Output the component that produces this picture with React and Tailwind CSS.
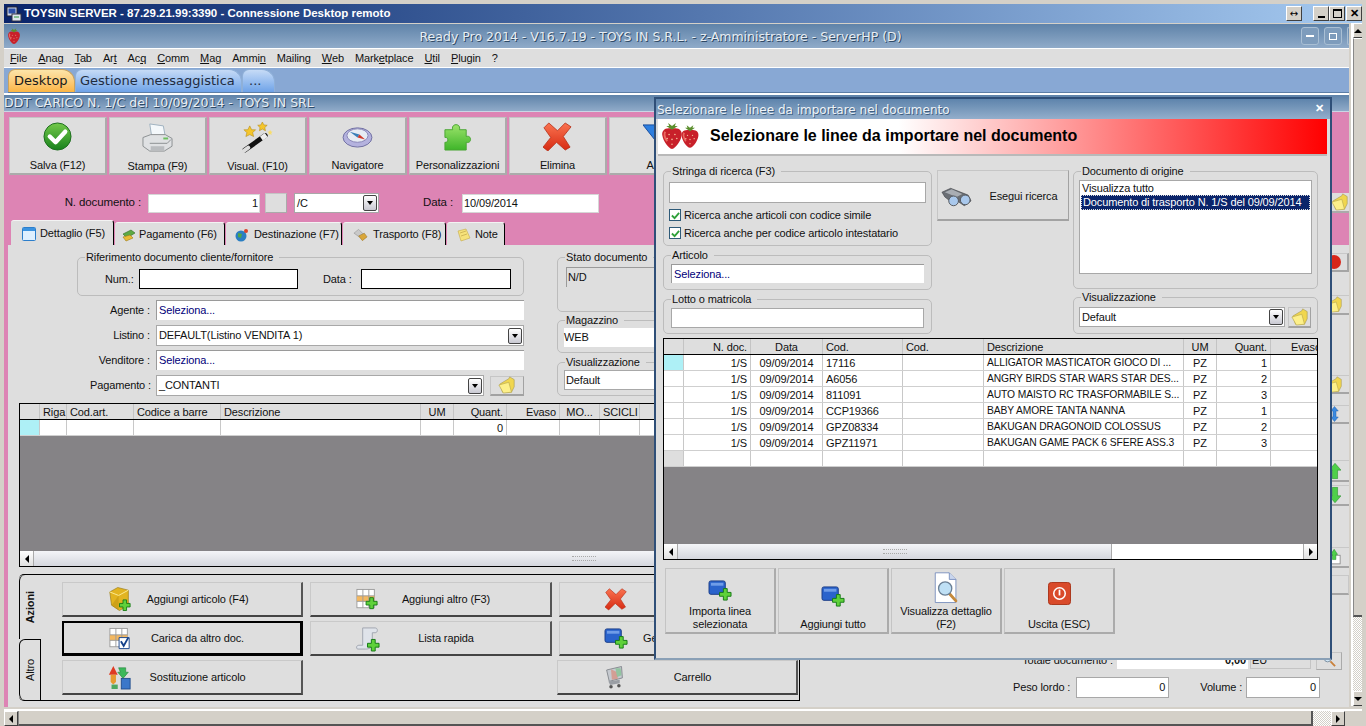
const FONT = "font-['Liberation_Sans',Arial,sans-serif]"

/* ---------- icons ---------- */
const Strawberry = ({ className }) => (
  <svg viewBox="0 0 24 28" className={className}>
    <path d="M12 6C5 4 1 8 2 13c1 6 6 13 10 14 4-1 9-8 10-14 1-5-3-9-10-7z" fill="#c8202a" />
    <path d="M5 9c-2 3 0 7 2 10" stroke="#ea6a60" strokeWidth="2" fill="none" />
    <path d="M12 7L6 3l3 0L8 0l4 3 4-3-1 3 3 0z" fill="#5c8f2e" />
    <g fill="#f3c6a0"><circle cx="9" cy="12" r=".8" /><circle cx="15" cy="12" r=".8" /><circle cx="12" cy="17" r=".8" /><circle cx="7" cy="16" r=".8" /><circle cx="17" cy="16" r=".8" /><circle cx="12" cy="22" r=".8" /></g>
  </svg>
)

const CheckOk = () => (
  <svg viewBox="0 0 30 30" className="w-[29px] h-[29px]">
    <defs><linearGradient id="okg" x1="0" y1="0" x2="0" y2="1"><stop offset="0" stopColor="#74c94a" /><stop offset="1" stopColor="#17811c" /></linearGradient></defs>
    <circle cx="15" cy="15" r="14" fill="url(#okg)" stroke="#1c6d1e" />
    <path d="M7 15l6 6L23 10" stroke="#fff" strokeWidth="4.5" fill="none" strokeLinecap="round" strokeLinejoin="round" />
  </svg>
)

const Printer = () => (
  <svg viewBox="0 0 32 32" className="w-[31px] h-[31px]">
    <path d="M8 2l14 2 2 11H10z" fill="#f4f8fb" stroke="#9fb2c0" />
    <path d="M1 16l8-3h15l7 4v8l-8 5H8l-7-5z" fill="#dfe1e3" stroke="#8b8f92" />
    <path d="M8 22h18l4-4" stroke="#8b8f92" fill="none" />
    <rect x="22" y="16" width="5" height="2" fill="#6bbf5e" />
    <path d="M9 25h14v4H9z" fill="#b9bcbf" />
  </svg>
)

const Wand = () => (
  <svg viewBox="0 0 32 32" className="w-[31px] h-[31px]">
    <path d="M3 29L24 14" stroke="#111" strokeWidth="5" strokeLinecap="round" />
    <path d="M1.5 30l5-3.6" stroke="#ddd" strokeWidth="4" strokeLinecap="round" />
    <path d="M20 17l5-3.5" stroke="#eee" strokeWidth="5" />
    <path d="M8 4l2 4 4 0-3 3 1 4-4-2-4 2 1-4-3-3 4 0z" fill="#f5c62c" stroke="#b48a18" strokeWidth=".6" />
    <path d="M21 0l1.6 3 3.4.4-2.500 2.300.7 3.300-3.200-1.700-3 1.700.6-3.300-2.400-2.300 3.300-.4z" fill="#f5c62c" stroke="#b48a18" strokeWidth=".6" />
    <path d="M29 8l.8 1.800 1.800.2-1.400 1.300.4 2-1.600-1-1.700 1 .4-2-1.300-1.300 1.800-.2z" fill="#f8dd6a" />
  </svg>
)

const Compass = () => (
  <svg viewBox="0 0 32 26" className="w-[31px] h-[25px]">
    <ellipse cx="16" cy="14" rx="15" ry="10" fill="#b4b2de" stroke="#6e6da0" />
    <ellipse cx="16" cy="12" rx="11" ry="7" fill="#e7ecf3" stroke="#8885b5" />
    <path d="M8 8l10 3-2 3z" fill="#3a7fb8" />
    <path d="M24 16l-8-2 2-3z" fill="#d03a2a" />
  </svg>
)

const PuzzleIcon = () => (
  <svg viewBox="0 0 32 30" className="w-[31px] h-[29px]">
    <defs><linearGradient id="pzg" x1="0" y1="0" x2="0" y2="1"><stop offset="0" stopColor="#9be36a" /><stop offset="1" stopColor="#3fb52a" /></linearGradient></defs>
    <path d="M3 8h8c-2-7 9-7 7 0h7v7c6-2 6 8 0 6v8H3v-8c4 1 4-6 0-5z" fill="url(#pzg)" stroke="#4aa534" />
  </svg>
)

const RedX = ({ size = 'w-[29px] h-[29px]' }) => (
  <svg viewBox="0 0 30 30" className={size}>
    <defs><linearGradient id="xg" x1="0" y1="0" x2="0" y2="1"><stop offset="0" stopColor="#fa7350" /><stop offset="1" stopColor="#d62a12" /></linearGradient></defs>
    <path d="M6 1l9 8 8-8 6 4-8 10 7 11-5 3-9-8-9 9-5-4 8-10L1 6z" fill="url(#xg)" stroke="#b42b14" strokeWidth=".8" strokeLinejoin="round" />
  </svg>
)

const Folder = ({ className = 'w-[18px] h-[18px]' }) => (
  <svg viewBox="0 0 20 20" className={className}>
    <path d="M2 9l10-6 1-2 5 3 0 8-3 6L5 18z" fill="#f0d64e" stroke="#a89b58" strokeWidth=".7" />
    <path d="M1 10l11-3 3 11-9 1z" fill="#fdf08a" stroke="#b8a84e" strokeWidth=".7" />
  </svg>
)

const GreenPlus = ({ x, y, s = 1 }) => (
  <path
    transform={`translate(${x} ${y}) scale(${s})`}
    d="M4 0h4v4h4v4H8v4H4V8H0V4h4z"
    fill="#5fd13a"
    stroke="#167a16"
  />
)

const BlueAdd = () => (
  <svg viewBox="0 0 26 24" className="w-[25px] h-[23px]">
    <rect x="1" y="2" width="17" height="14" rx="2" fill="#2a63cc" stroke="#1b3d87" />
    <rect x="3" y="4" width="13" height="3" fill="#6f9ce8" />
    <GreenPlus x={12} y={10} />
  </svg>
)

const GoldBox = () => (
  <svg viewBox="0 0 26 28" className="w-[23px] h-[28px]">
    <path d="M2 6l9-5 12 3v17l-10 6-9-6z" fill="#e2b420" stroke="#96760e" strokeWidth=".7" />
    <path d="M2 6l10 4 11-6" fill="none" stroke="#fff0a0" />
    <path d="M12 10v17L4 21z" fill="#b88e10" opacity=".5" />
    <GreenPlus x={13} y={15} />
  </svg>
)

const TableIcon = ({ children }) => (
  <svg viewBox="0 0 24 24" className="w-[22px] h-[23px]">
    <rect x="1" y="1" width="19" height="20" fill="#fff" stroke="#9a9a9a" />
    <rect x="1" y="8" width="19" height="6" fill="#f4b860" />
    <path d="M1 8h19M1 14h19M7.500 1v20M14 1v20" stroke="#9a9a9a" fill="none" />
    {children}
  </svg>
)

const ScrollPlus = () => (
  <svg viewBox="0 0 26 28" className="w-[25px] h-[27px]">
    <path d="M8 3h13c3 0 3 5 0 5h-3v11c0 5-4 6-7 6H3c-2 0-2-4 1-4h4z" fill="#dfe3ea" stroke="#a0a5b0" />
    <GreenPlus x={13} y={15} />
  </svg>
)

const SwapIcon = () => (
  <svg viewBox="0 0 26 28" className="w-[23px] h-[27px]">
    <path d="M6 1l5 10H1z" fill="#df3a22" />
    <path d="M3 11h6v8l-3 3-3-3z" fill="#e89a30" />
    <path d="M12 3h8v5l3 0-6 7-6-7h3z" fill="#3cb85a" stroke="#1c7a34" strokeWidth=".6" />
    <rect x="15" y="15" width="10" height="12" fill="#3b77c9" stroke="#1f4a8a" />
    <path d="M4 22h7v5H4z" fill="#4ea860" />
  </svg>
)

const Cart = () => (
  <svg viewBox="0 0 24 28" className="w-[21px] h-[26px]">
    <path d="M3 6l17-4 1 13-15 4z" fill="#c6cad0" stroke="#7f8389" />
    <path d="M8 5l6 3 2 8-7 1z" fill="#d88c7a" opacity=".7" />
    <path d="M13 4l6 0 1 8-5 2z" fill="#7cc28c" opacity=".7" />
    <path d="M5 19l13-2v4l-11 2z" fill="#9a9ea4" />
    <circle cx="8" cy="25" r="2" fill="#555" /><circle cx="17" cy="24" r="2" fill="#555" />
  </svg>
)

const Binoculars = () => (
  <svg viewBox="0 0 32 20" className="w-[31px] h-[20px] shrink-0">
    <path d="M1 5l9-4 18 7 3 6-7 5-6-4-5 2-9-7z" fill="#6a6e74" stroke="#3c3f44" strokeWidth=".6" />
    <path d="M4 5l7-3 11 5-6 3z" fill="#a9adb3" />
    <circle cx="13" cy="14" r="5" fill="#a9c8ec" stroke="#54585e" />
    <circle cx="25" cy="13" r="5" fill="#a9c8ec" stroke="#54585e" />
  </svg>
)

const DocSearch = () => (
  <svg viewBox="0 0 28 40" className="w-[26px] h-[38px]">
    <path d="M1 1h17l8 8v28H1z" fill="#fff" stroke="#6d86b8" />
    <path d="M18 1v8h8" fill="#c9d6ee" stroke="#6d86b8" />
    <path d="M18 26l8 9" stroke="#c58a3c" strokeWidth="3.5" strokeLinecap="round" />
    <circle cx="13" cy="20" r="8" fill="#bfe0f5" stroke="#6a7f95" strokeWidth="1.600" />
  </svg>
)

const PowerIcon = () => (
  <svg viewBox="0 0 24 24" className="w-[23px] h-[23px]">
    <rect x=".5" y=".5" width="23" height="23" rx="3" fill="#d94a2a" stroke="#a93318" />
    <circle cx="12" cy="12" r="6" fill="none" stroke="#fff" strokeWidth="1.600" />
    <path d="M12 8v6" stroke="#fff" strokeWidth="1.800" />
  </svg>
)

const ComboArrow = () => (
  <div className="flex items-center justify-center w-[14px] h-[16px] rounded-[2px] border border-[#444] bg-linear-to-b from-white to-[#c9c9d2]">
    <div className="border-x-[3px] border-x-transparent border-t-[4px] border-t-black" />
  </div>
)

const Check = ({ label }) => (
  <div className="flex items-center gap-[2px] h-[14px]">
    <div className="flex items-center justify-center w-[12px] h-[12px] border border-[#2e5a78] bg-white">
      <svg viewBox="0 0 10 10" className="w-[9px] h-[9px]"><path d="M1 5l3 3 5-6" stroke="#2fa03a" strokeWidth="2" fill="none" /></svg>
    </div>
    <span className="ml-[1px]">{label}</span>
  </div>
)

/* ---------- form bits ---------- */
const Group = ({ label, className = '', inner = '', children }) => (
  <fieldset className={`border border-[#bcbcbc] rounded-[5px] ${className}`}>
    <legend className="ml-[7px] px-[1px] pr-[6px] leading-[13px]">{label}</legend>
    <div className={inner}>{children}</div>
  </fieldset>
)

const SelectLink = ({ className = '' }) => (
  <div className={`flex items-center bg-white border-l border-t border-[#9a9a9a] border-b-[#efefef] px-[2px] text-[#00007a] ${className}`}>Seleziona...</div>
)

const Combo = ({ value, className = '' }) => (
  <div className={`flex items-center justify-between bg-white border border-[#a8a8a8] pl-[2px] pr-[1px] ${className}`}>
    <span>{value}</span>
    <ComboArrow />
  </div>
)

const GreyBtn = ({ className = '', children }) => (
  <div className={`flex items-center justify-center bg-[#dedede] border border-[#c6c6c6] border-b-[#a2a2a2] border-r-[#a2a2a2] border-b-2 ${className}`}>{children}</div>
)

const ToolBtn = ({ icon, label }) => (
  <div className="flex flex-col items-center w-[98px] h-[58px] bg-[#dedede] border border-[#c4c4c4] border-b-2 border-r-2 border-b-[#ababab] border-r-[#ababab]">
    <div className="h-[37px] flex items-center justify-center pt-[4px]">{icon}</div>
    <div className="mt-[5px] whitespace-nowrap">{label}</div>
  </div>
)

const ActionBtn = ({ icon, label, active, w = 'w-[241px]', labelClass = 'text-center pr-[38px]' }) => (
  <div className={`flex items-center h-[35px] ${w} bg-[#dedede] border ${active ? 'border-black border-2 border-r-[3px] border-b-[3px]' : 'border-[#c9c9c9] border-b-2 border-r-2 border-b-[#444] border-r-[#555]'}`}>
    <div className="w-[26px] flex justify-center ml-[43px]">{icon}</div>
    <div className={`flex-1 whitespace-nowrap ${labelClass}`}>{label}</div>
  </div>
)

const DataGrid = ({ cols, rows, className = '', thumb }) => (
  <div className={`border border-black bg-[#858386] flex flex-col ${className}`}>
    <div className="flex h-[16px] bg-[#dedede] border-b border-black shrink-0">
      {cols.map((c, i) => (
        <div key={i} style={{ width: c.w }} className={`shrink-0 border-r border-[#c4c4c4] px-[3px] leading-[16px] whitespace-nowrap overflow-hidden ${c.right ? 'text-right' : ''} ${c.center ? 'text-center' : ''}`}>
          {c.label}
        </div>
      ))}
    </div>
    {rows.map((r, ri) => (
      <div key={ri} className="flex h-[16px] bg-white border-b border-[#cfcfcf] last:border-b-black last:h-[17px] shrink-0">
        {cols.map((c, i) => (
          <div
            key={i}
            style={{ width: c.w }}
            className={`shrink-0 border-r border-[#c8c8c8] px-[3px] leading-[16px] whitespace-nowrap overflow-hidden ${c.right ? 'text-right' : ''} ${c.center ? 'text-center' : ''} ${c.tight ? 'text-[10.300px]' : ''} ${i === 0 && ri === 0 ? 'bg-[#aef0f6]' : ''} ${i === 0 && r.empty ? 'bg-[#dedede]' : ''}`}
          >
            {r[i]}
          </div>
        ))}
      </div>
    ))}
    <div className="flex-1" />
    <div className="flex h-[15px] bg-white shrink-0">
      <div className="flex items-center justify-center w-[14px] bg-linear-to-b from-[#fff] to-[#e0e0e0] border-r border-[#aaa]">
        <div className="border-y-[4px] border-y-transparent border-r-[4px] border-r-black" />
      </div>
      <div className="flex items-center justify-center bg-linear-to-b from-[#f4f5f8] to-[#d5d7de] border-r border-[#aaa]" style={{ width: thumb }}>
        <div className="w-[24px] h-[5px] border-y border-dotted border-[#a8a8a8]" />
      </div>
      <div className="flex-1" />
      <div className="flex items-center justify-center w-[14px] bg-linear-to-b from-[#fff] to-[#e0e0e0] border-l border-[#aaa]">
        <div className="border-y-[4px] border-y-transparent border-l-[4px] border-l-black" />
      </div>
    </div>
  </div>
)

const mainCols = [
  { label: '', w: 20 }, { label: 'Riga', w: 27 }, { label: 'Cod.art.', w: 67 }, { label: 'Codice a barre', w: 87 },
  { label: 'Descrizione', w: 200 }, { label: 'UM', w: 33, center: true }, { label: 'Quant.', w: 53, right: true },
  { label: 'Evaso', w: 53, right: true }, { label: 'MO...', w: 40, center: true }, { label: 'SCICLI', w: 40, center: true },
  { label: '', w: 660 },
]

const importCols = [
  { label: '', w: 20 }, { label: 'N. doc.', w: 67, right: true }, { label: 'Data', w: 72, center: true }, { label: 'Cod.', w: 80 },
  { label: 'Cod.', w: 81 }, { label: 'Descrizione', w: 200, tight: true }, { label: 'UM', w: 33, center: true }, { label: 'Quant.', w: 54, right: true },
  { label: 'Evaso', w: 54, right: true },
]

const importRows = [
  ['', '1/S', '09/09/2014', '17116', '', 'ALLIGATOR MASTICATOR GIOCO DI ...', 'PZ', '1', ''],
  ['', '1/S', '09/09/2014', 'A6056', '', 'ANGRY BIRDS STAR WARS STAR DES...', 'PZ', '2', ''],
  ['', '1/S', '09/09/2014', '811091', '', 'AUTO MAISTO RC TRASFORMABILE S...', 'PZ', '3', ''],
  ['', '1/S', '09/09/2014', 'CCP19366', '', 'BABY AMORE TANTA NANNA', 'PZ', '1', ''],
  ['', '1/S', '09/09/2014', 'GPZ08334', '', 'BAKUGAN DRAGONOID COLOSSUS', 'PZ', '2', ''],
  ['', '1/S', '09/09/2014', 'GPZ11971', '', 'BAKUGAN GAME PACK 6 SFERE ASS.3', 'PZ', '3', ''],
]
const emptyRow = Object.assign(Array(9).fill(''), { empty: true })

const menu = [
  ['', 'F', 'ile'], ['', 'A', 'nag'], ['', 'T', 'ab'], ['Ar', 't', ''], ['Ac', 'q', ''], ['', 'C', 'omm'], ['', 'M', 'ag'],
  ['Ammi', 'n', ''], ['Mailin', 'g', ''], ['', 'W', 'eb'], ['Mark', 'e', 'tplace'], ['', 'U', 'til'], ['', 'P', 'lugin'], ['?', '', ''],
]

const WinBtn = ({ children }) => (
  <div className="flex items-center justify-center w-[16px] h-[15px] bg-[#d4d0c8] border border-[#fff] border-b-[#404040] border-r-[#404040] text-black">{children}</div>
)

const tabs = [
  { label: 'Dettaglio (F5)', w: 'w-[103px] pl-[11px]', gap: 'gap-[4px]', icon: <svg viewBox="0 0 14 14" className="w-[14px] h-[14px]"><rect x=".5" y=".5" width="13" height="13" rx="1" fill="#dff0ff" stroke="#2c7ecb" /><rect x="1" y="1" width="12" height="3" fill="#3b93e0" /></svg> },
  { label: 'Pagamento (F6)', w: 'w-[110px] pl-[7px]', gap: 'gap-[3px]', icon: <svg viewBox="0 0 14 14" className="w-[14px] h-[14px]"><path d="M1 6l8-4 4 3-8 5z" fill="#5da944" stroke="#2f6c22" strokeWidth=".6" /><path d="M1 9l7-2 3 3-7 3z" fill="#e9bb34" stroke="#9c7a18" strokeWidth=".6" /></svg> },
  { label: 'Destinazione (F7)', w: 'w-[116px] pl-[9px]', gap: 'gap-[5px]', icon: <svg viewBox="0 0 14 14" className="w-[14px] h-[14px]"><circle cx="6" cy="8" r="5.500" fill="#2a7ec2" /><path d="M3 5l4 1-1 4-3-1z" fill="#4fa548" /><circle cx="11" cy="3" r="2" fill="#d8432a" /></svg> },
  { label: 'Trasporto (F8)', w: 'w-[103px] pl-[10px]', gap: 'gap-[5px]', icon: <svg viewBox="0 0 16 14" className="w-[15px] h-[14px]"><path d="M1 5l5-4 5 5-3 4z" fill="#c9c9c9" stroke="#888" strokeWidth=".5" /><path d="M6 8l6-3 3 4-5 4z" fill="#d9a63a" stroke="#8f6a18" strokeWidth=".5" /></svg> },
  { label: 'Note', w: 'w-[58px] pl-[10px]', gap: 'gap-[4px]', icon: <svg viewBox="0 0 14 14" className="w-[14px] h-[14px]"><path d="M1 3l8-2 4 9-9 3z" fill="#f6e27a" stroke="#c5a94a" strokeWidth=".6" /><path d="M3 5l6-2M4 8l6-2" stroke="#b79a3f" strokeWidth=".6" /></svg> },
]

const StripBtn = ({ className = '', children }) => (
  <div className={`flex items-center justify-center w-[29px] bg-[#dedede] border-t border-[#c8c8c8] border-b-2 border-b-[#a5a5a5] shrink-0 ${className}`}>{children}</div>
)

function ImportDialog() {
  return (
    <div className="absolute left-[650px] top-[97px] w-[678px] h-[563px] bg-[#dedede] border-2 border-[#2f4f78] border-b-[#8aa0b6] flex flex-col">
      <div className="flex items-center justify-between h-[20px] pt-[2px] pl-[1px] pr-[5px] bg-linear-to-b from-[#5e84ac] to-[#93aecb] shrink-0">
        <span className="font-['DejaVu_Sans',sans-serif] text-[12px] tracking-normal text-[#eef3f8] [text-shadow:1px_1px_0_#3f5f80] whitespace-nowrap">Selezionare le linee da importare nel documento</span>
        <span className="flex items-center justify-center w-[11px] h-[11px] text-white text-[11px] font-bold -mt-[3px]">✕</span>
      </div>
      <div className="flex items-center h-[37px] mx-[2px] mr-[3px] pl-[2px] border-b-2 border-[#b9b9b9] bg-[linear-gradient(to_right,#ffffff_0%,#ffffff_36%,#ff0000_100%)] shrink-0">
        <div className="flex w-[40px]">
          <Strawberry className="w-[24px] h-[27px]" />
          <Strawberry className="w-[20px] h-[24px] -ml-[4px] mt-[2px]" />
        </div>
        <span className="ml-[10px] -mt-[1px] font-bold text-[16px] tracking-normal text-black whitespace-nowrap">Selezionare le linee da importare nel documento</span>
      </div>

      <div className="flex gap-[5px] pl-[7px] mt-[9px] h-[170px] shrink-0">
        <div className="flex flex-col w-[269px] gap-[3px]">
          <Group label="Stringa di ricerca (F3)" className="h-[81px]" inner="px-[5px]">
            <div className="h-[21px] bg-white border border-[#a8a8a8] mt-[4px]" />
            <div className="flex flex-col gap-[4px] mt-[5px]">
              <Check label="Ricerca anche articoli con codice simile" />
              <Check label="Ricerca anche per codice articolo intestatario" />
            </div>
          </Group>
          <Group label="Articolo" className="h-[41px]" inner="px-[7px]">
            <SelectLink className="h-[19px] mt-[2px]" />
          </Group>
          <Group label="Lotto o matricola" className="h-[41px]" inner="px-[7px]">
            <div className="h-[20px] mt-[2px] bg-white border border-[#a8a8a8]" />
          </Group>
        </div>
        <GreyBtn className="w-[132px] h-[51px] mt-[5px] gap-[17px] pr-[7px] pt-[3px]">
          <Binoculars />
          <span className="whitespace-nowrap">Esegui ricerca</span>
        </GreyBtn>
        <div className="flex flex-col gap-[2px] w-[245px] -ml-[1px]">
          <Group label="Documento di origine" className="h-[124px]" inner="px-[5px]">
            <div className="h-[94px] mt-[2px] bg-white border border-[#a8a8a8] pt-[1px] px-[2px]">
              <div className="leading-[13px]">Visualizza tutto</div>
              <div className="leading-[13px] bg-[#0a246a] text-white border border-dotted border-[#ddd] -mx-[1px] px-[1px] whitespace-nowrap">Documento di trasporto N. 1/S del 09/09/2014</div>
            </div>
          </Group>
          <Group label="Visualizzazione" className="h-[43px]" inner="px-[5px]">
            <div className="flex gap-[3px] mt-[3px]">
              <Combo value="Default" className="w-[206px] h-[20px]" />
              <GreyBtn className="w-[23px] h-[21px]"><Folder /></GreyBtn>
            </div>
          </Group>
        </div>
      </div>

      <DataGrid cols={importCols} rows={[...importRows, emptyRow]} thumb={434} className="ml-[7px] w-[655px] h-[222px] mt-[3px] shrink-0 overflow-hidden" />

      <div className="flex gap-[2px] ml-[9px] mt-[8px]">
        {[
          { icon: <BlueAdd />, lines: ['Importa linea', 'selezionata'], pt: 'pt-[10px]' },
          { icon: <BlueAdd />, lines: ['Aggiungi tutto'], pt: 'pt-[16px]' },
          { icon: <DocSearch />, lines: ['Visualizza dettaglio', '(F2)'], pt: 'pt-[3px]' },
          { icon: <PowerIcon />, lines: ['Uscita (ESC)'], pt: 'pt-[13px]' },
        ].map((b, i) => (
          <div key={i} className={`flex flex-col items-center w-[111px] h-[66px] bg-[#dedede] border border-[#c4c4c4] border-b-2 border-r-2 border-b-[#ababab] border-r-[#ababab] ${b.pt}`}>
            {b.icon}
            <div className="mt-auto mb-[1px] text-center leading-[13px] whitespace-nowrap">
              {b.lines.map((l) => <div key={l}>{l}</div>)}
            </div>
          </div>
        ))}
      </div>
    </div>
  )
}

export default function App() {
  return (
    <div className={`${FONT} relative w-[1366px] h-[726px] overflow-hidden bg-[#d4d0c8] text-[11px] tracking-[-0.12px] text-[#111] pt-[4px] flex flex-col border-l-[4px] border-r-[4px] border-[#d4d0c8]`}>
      {/* remote desktop title */}
      <div className="flex items-center h-[19px] bg-linear-to-r from-[#0a246a] to-[#a6caf0] shrink-0 pl-[2px]">
        <svg viewBox="0 0 16 16" className="w-[16px] h-[16px]">
          <rect x="1" y="1" width="10" height="9" fill="#cfd8ea" stroke="#223" />
          <rect x="2.500" y="2.500" width="7" height="5" fill="#2d50a8" />
          <rect x="6" y="8" width="9" height="7" fill="#dfe6ee" stroke="#334" />
          <path d="M8 11h5" stroke="#2f9a3a" />
        </svg>
        <span className="ml-[2px] font-bold text-white text-[11.500px] tracking-normal whitespace-nowrap">TOYSIN SERVER - 87.29.21.99:3390 - Connessione Desktop remoto</span>
        <div className="ml-auto flex items-center">
          <WinBtn><span className="font-['DejaVu_Sans',sans-serif] text-[10px] leading-none">↔</span></WinBtn>
          <div className="w-[11px]" />
          <WinBtn><div className="w-[7px] h-[2px] bg-black mt-[6px]" /></WinBtn>
          <WinBtn><div className="w-[9px] h-[9px] border border-black border-t-2" /></WinBtn>
          <div className="w-[1px]" />
          <WinBtn><span className="font-bold text-[11px] leading-none">✕</span></WinBtn>
        </div>
      </div>

      <div className="flex flex-1 min-h-0 mt-[1px]">
        {/* application window */}
        <div className="flex flex-col w-[1345px] h-[683px] relative">
          <div className="flex items-center h-[25px] bg-linear-to-b from-[#5f83a9] to-[#90abc9] border-b border-white shrink-0 relative">
            <Strawberry className="w-[14px] h-[17px] ml-[3px]" />
            <div className="flex-1 text-center pt-[3px] font-['DejaVu_Sans',sans-serif] text-[12.500px] tracking-normal text-[#e7edf3] [text-shadow:1px_1px_0_#2f4a66] pr-[49px] whitespace-nowrap">
              Ready Pro 2014 - V16.7.19 - TOYS IN S.R.L. - z-Amministratore - ServerHP (D)
            </div>
            <div className="absolute right-0 top-[3px] flex gap-[5px]">
              <div className="flex items-center justify-center w-[18px] h-[18px] rounded-[3px] border border-[#a9bfd4] bg-[#7e9cbc]"><div className="w-[8px] h-[2px] bg-white" /></div>
              <div className="flex items-center justify-center w-[18px] h-[18px] rounded-[3px] border border-[#a9bfd4] bg-[#7e9cbc]"><div className="w-[8px] h-[7px] border border-white" /></div>
              <div className="w-[2px] h-[18px] rounded-l-[3px] border-l border-y border-[#a9bfd4]" />
            </div>
          </div>

          <div className="flex items-center gap-[11px] h-[19px] pl-[6px] bg-[#dedede] border-b border-white shrink-0 text-[11px]">
            {menu.map(([a, u, b], i) => (
              <span key={i}>{a}<u>{u}</u>{b}</span>
            ))}
          </div>

          <div className="flex items-end h-[27px] pl-[4px] bg-[#88a8d4] border-b-2 border-[#fff] shrink-0 font-['DejaVu_Sans',sans-serif] text-[13px] tracking-normal">
            <div className="relative flex items-end h-full w-full border-b border-[#5d7ea6]">
              <div className="flex items-center h-[23px] w-[67px] pl-[5px] rounded-t-[7px] rounded-tr-[13px] bg-linear-to-b from-[#fce4a8] to-[#fbb543] border border-b-0 border-[#c9a25e] text-[#1a1a1a]">Desktop</div>
              <div className="flex items-center h-[23px] w-[167px] pl-[4px] rounded-t-[7px] rounded-tr-[13px] bg-linear-to-b from-[#c6dbf6] to-[#6fa3e8] border border-b-0 border-[#8fb0d8] text-[#1f2c40]">Gestione messaggistica</div>
              <div className="flex items-center h-[23px] w-[33px] pl-[6px] rounded-t-[7px] rounded-tr-[13px] bg-linear-to-b from-[#c6dbf6] to-[#6fa3e8] border border-b-0 border-[#8fb0d8] text-[#1f2c40]">...</div>
            </div>
          </div>

          <div className="flex items-center h-[17px] bg-linear-to-b from-[#5f83a9] to-[#90abc9] border-b border-[#c9d7e5] shrink-0 font-['DejaVu_Sans',sans-serif] text-[12.500px] tracking-normal text-[#e7edf3] [text-shadow:1px_1px_0_#2f4a66]">
            DDT CARICO N. 1/C del 10/09/2014 - TOYS IN SRL
          </div>

          {/* pink document area */}
          <div className="flex flex-col flex-1 min-h-0 bg-[#dd84b4] pl-[5px]">
            <div className="flex gap-[2px] mt-[5px]">
              <ToolBtn icon={<CheckOk />} label="Salva (F12)" />
              <ToolBtn icon={<Printer />} label="Stampa (F9)" />
              <ToolBtn icon={<Wand />} label="Visual. (F10)" />
              <ToolBtn icon={<Compass />} label="Navigatore" />
              <ToolBtn icon={<PuzzleIcon />} label="Personalizzazioni" />
              <ToolBtn icon={<RedX />} label="Elimina" />
              <ToolBtn icon={<svg viewBox="0 0 30 30" className="w-[29px] h-[29px]"><path d="M0 3h28l-9 24z" fill="#2d7fe0" stroke="#1a4f9e" /></svg>} label="Altro" />
            </div>

            <div className="flex items-center h-[20px] mt-[18px]">
              <span className="w-[132px] text-right text-[11.500px]">N. documento :</span>
              <div className="ml-[7px] flex items-center justify-end w-[112px] h-[19px] bg-white border border-[#d6d6d6] pr-[1px]">1</div>
              <div className="ml-[5px] w-[22px] h-[20px] bg-[#dedede] border border-[#c4c4c4] border-b-[#aaa] border-r-[#aaa]" />
              <Combo value="/C" className="ml-[7px] w-[85px] h-[20px]" />
              <span className="ml-[44px] text-[11.500px]">Data :</span>
              <div className="ml-[9px] flex items-center w-[137px] h-[19px] bg-white border border-[#d6d6d6] pl-[1px]">10/09/2014</div>
              <div className="ml-auto w-[18px] h-[20px] bg-[#dedede] border-b-2 border-[#aaa] flex justify-center items-center"><Folder /></div>
            </div>

            <div className="flex items-end h-[27px] mt-[5px] pl-[2px] shrink-0">
              {tabs.map((t, i) => (
                <div key={t.label} className={`flex items-center pt-[1px] ${t.gap} ${t.w} rounded-t-[3px] bg-[#dedede] border-t border-[#f3f3f3] border-r border-r-black ${i === 0 ? 'h-[25px] -mt-[2px]' : 'h-[23px] ml-[1px]'}`}>
                  {t.icon}
                  <span className="whitespace-nowrap">{t.label}</span>
                </div>
              ))}
            </div>

            {/* detail panel */}
            <div className="flex flex-1 min-h-0 -ml-[1px] bg-[#dedede]">
              <div className="flex flex-col w-[1312px] shrink-0">
                <div className="flex h-[158px] shrink-0">
                  <div className="ml-[69px] w-[447px] pt-[6px]">
                    <Group label="Riferimento documento cliente/fornitore" className="h-[45px]">
                      <div className="flex items-center pl-[27px] h-[20px] mt-[5px]">
                        <span className="w-[34px]">Num.:</span>
                        <div className="w-[159px] h-[20px] bg-white border border-black" />
                        <span className="ml-[25px] w-[38px]">Data :</span>
                        <div className="w-[150px] h-[20px] bg-white border border-black" />
                      </div>
                    </Group>
                    <div className="flex items-center h-[20px] mt-[4px]">
                      <span className="w-[79px] text-right pr-[6px]">Agente :</span>
                      <SelectLink className="w-[368px] h-[20px]" />
                    </div>
                    <div className="flex items-center h-[21px] mt-[5px]">
                      <span className="w-[79px] text-right pr-[6px]">Listino :</span>
                      <Combo value="DEFAULT(Listino VENDITA 1)" className="w-[368px] h-[21px]" />
                    </div>
                    <div className="flex items-center h-[20px] mt-[4px]">
                      <span className="w-[79px] text-right pr-[6px]">Venditore :</span>
                      <SelectLink className="w-[368px] h-[20px]" />
                    </div>
                    <div className="flex items-center h-[21px] mt-[5px]">
                      <span className="w-[79px] text-right pr-[5px]">Pagamento :</span>
                      <Combo value="_CONTANTI" className="w-[328px] h-[21px]" />
                      <GreyBtn className="ml-[6px] w-[34px] h-[20px]"><Folder /></GreyBtn>
                    </div>
                  </div>
                  <div className="ml-[33px] w-[760px] pt-[6px] flex flex-col">
                    <Group label="Stato documento" className="h-[61px]" inner="px-[8px]">
                      <div className="h-[20px] mt-[3px] border-l border-t border-[#9a9a9a] pl-[1px] leading-[18px]">N/D</div>
                    </Group>
                    <Group label="Magazzino" className="h-[39px] mt-[2px]" inner="px-[6px]">
                      <div className="h-[19px] mt-[1px] bg-white leading-[19px]">WEB</div>
                    </Group>
                    <Group label="Visualizzazione" className="h-[40px] mt-[3px]" inner="px-[6px]">
                      <div className="h-[20px] mt-[1px] bg-white border border-[#a8a8a8] leading-[18px] pl-[1px]">Default</div>
                    </Group>
                  </div>
                </div>

                <DataGrid cols={mainCols} rows={[['', '', '', '', '', '', '0', '', '', '', '']]} thumb={1100} className="ml-[11px] w-[1301px] h-[164px] shrink-0" />

                <div className="flex mt-[7px] h-[127px] shrink-0">
                  <div className="flex ml-[11px] w-[781px] h-[127px] rounded-l-[5px] border-y border-r border-black">
                    <div className="flex flex-col w-[22px] shrink-0">
                      <div className="flex items-center justify-center h-[64px] bg-[#dedede] border-l border-black rounded-tl-[6px]">
                        <span className="[writing-mode:vertical-rl] rotate-180 font-bold">Azioni</span>
                      </div>
                      <div className="flex items-center justify-center flex-1 border-l border-r border-t border-black rounded-l-[6px] rounded-tr-none bg-[#dedede]">
                        <span className="[writing-mode:vertical-rl] rotate-180">Altro</span>
                      </div>
                    </div>
                    <div className="flex flex-col gap-[4px] ml-[21px] pt-[7px]">
                      <div className="flex gap-[7px]">
                        <ActionBtn icon={<GoldBox />} label="Aggiungi articolo (F4)" />
                        <ActionBtn icon={<TableIcon><GreenPlus x={11} y={10} /></TableIcon>} label="Aggiungi altro (F3)" w="w-[242px]" />
                        <ActionBtn icon={<RedX size="w-[22px] h-[28px]" />} label="" />
                      </div>
                      <div className="flex gap-[7px]">
                        <ActionBtn icon={<TableIcon><path d="M11 11h11v12H11z" fill="#fff" stroke="#14418a" /><path d="M13 15l3 5 5-9" stroke="#14418a" strokeWidth="2" fill="none" /></TableIcon>} label="Carica da altro doc." active />
                        <ActionBtn icon={<ScrollPlus />} label="Lista rapida" w="w-[242px]" />
                        <ActionBtn icon={<BlueAdd />} label="Genera" labelClass="text-left pl-[14px]" />
                      </div>
                      <div className="flex gap-[6px]">
                        <ActionBtn icon={<SwapIcon />} label="Sostituzione articolo" />
                        <div className="w-[242px]" />
                        <ActionBtn icon={<Cart />} label="Carrello" />
                      </div>
                    </div>
                  </div>
                  <div className="flex flex-col flex-1 pl-[100px]">
                    <div className="flex items-center justify-end w-[442px] shrink-0 h-[17px] mt-[78px]">
                      <span>Totale documento :</span>
                      <div className="ml-[4px] flex items-center justify-end w-[131px] h-[17px] bg-white font-bold pr-[2px]">0,00</div>
                      <div className="ml-[2px] flex items-center w-[61px] h-[17px] bg-[#dedede] border border-[#c4c4c4] pl-[1px]">EU</div>
                      <div className="ml-[5px] flex items-center justify-center w-[26px] h-[18px] bg-[#dedede] border border-[#c4c4c4] border-b-[#aaa] border-r-[#aaa]">
                        <svg viewBox="0 0 14 14" className="w-[13px] h-[13px]"><circle cx="5" cy="5" r="3.500" fill="#cfe5f6" stroke="#7a8c9c" /><path d="M8 8l5 5" stroke="#c9803a" strokeWidth="2" /></svg>
                      </div>
                    </div>
                    <div className="flex items-center h-[21px] mt-[8px]">
                      <span className="ml-[113px]">Peso lordo :</span>
                      <div className="ml-[6px] flex items-center justify-end w-[93px] h-[21px] bg-white border border-[#a8a8a8] pr-[3px]">0</div>
                      <span className="ml-[31px]">Volume :</span>
                      <div className="ml-[4px] flex items-center justify-end w-[74px] h-[21px] bg-white border border-[#a8a8a8] pr-[3px]">0</div>
                    </div>
                  </div>
                </div>
              </div>

              {/* icon column mostly hidden by the dialog */}
              <div className="flex flex-col w-[29px] shrink-0">
                <StripBtn className="h-[19px] mt-[8px] border border-[#c8c8c8] border-b-2 border-r-2 border-r-[#a5a5a5]"><div className="w-[14px] h-[14px] rounded-full bg-[#d8261a]" /></StripBtn>
                <StripBtn className="h-[20px] mt-[23px]"><Folder className="w-[17px] h-[17px]" /></StripBtn>
                <StripBtn className="h-[19px] mt-[60px]"><Folder className="w-[17px] h-[17px]" /></StripBtn>
                <StripBtn className="h-[19px] mt-[11px]"><svg viewBox="0 0 12 20" className="w-[9px] h-[18px]"><path d="M6 0l5 6H8v8h3l-5 6-5-6h3V6H1z" fill="#3b8ae0" stroke="#1d5ba8" strokeWidth=".6" /></svg></StripBtn>
                <StripBtn className="h-[22px] mt-[36px]"><svg viewBox="0 0 14 18" className="w-[12px] h-[16px]"><path d="M7 0l7 8h-4v10H4V8H0z" fill="#4fd04a" stroke="#1f8a24" strokeWidth=".6" /></svg></StripBtn>
                <StripBtn className="h-[21px] mt-[3px]"><svg viewBox="0 0 14 18" className="w-[12px] h-[16px]"><path d="M7 18l7-8h-4V0H4v10H0z" fill="#4fd04a" stroke="#1f8a24" strokeWidth=".6" /></svg></StripBtn>
                <StripBtn className="h-[21px] mt-[41px]"><svg viewBox="0 0 14 18" className="w-[12px] h-[16px]"><rect x="3" y="7" width="10" height="10" fill="#fff" stroke="#8a8a8a" /><path d="M6 0l4 6H8v6H4V6H2z" fill="#4fd04a" stroke="#1f8a24" strokeWidth=".6" /></svg></StripBtn>
                <StripBtn className="h-[20px] mt-[7px] border border-[#c8c8c8]" />
              </div>
            </div>
          </div>
        </div>

        {/* vertical scrollbar */}
        <div className="flex flex-col w-[15px] ml-[2px] h-[683px] bg-[#d4d0c8] border-l-2 border-white -mt-[1px]">
          <div className="flex items-center justify-center h-[15px] border border-white border-b-[#404040] border-r-[#404040]"><div className="border-x-[4px] border-x-transparent border-b-[4px] border-b-black" /></div>
          <div className="h-[579px] border-x border-[#888] border-b-2 border-b-[#555] border-t border-t-white" />
          <div className="flex-1 bg-[repeating-conic-gradient(#fff_0%_25%,#d4d0c8_0%_50%)] bg-[length:2px_2px]" />
          <div className="flex items-center justify-center h-[15px] border border-white border-b-[#404040] border-r-[#404040]"><div className="border-x-[4px] border-x-transparent border-t-[4px] border-t-black" /></div>
        </div>
      </div>

      {/* horizontal scrollbar */}
      <div className="flex h-[17px] bg-[#d4d0c8] shrink-0 border-t-2 border-white pr-[17px]">
        <div className="flex items-center justify-center w-[14px] border border-white border-b-[#404040] border-r-[#404040]"><div className="border-y-[4px] border-y-transparent border-r-[4px] border-r-black" /></div>
        <div className="flex-1 border-b-2 border-b-[#555] border-r-2 border-r-[#555] border-l border-l-[#888]" />
        <div className="w-[18px] bg-[repeating-conic-gradient(#fff_0%_25%,#d4d0c8_0%_50%)] bg-[length:2px_2px]" />
        <div className="flex items-center justify-center w-[14px] border border-white border-b-[#404040] border-r-[#404040]"><div className="border-y-[4px] border-y-transparent border-l-[4px] border-l-black" /></div>
      </div>

      <ImportDialog />
    </div>
  )
}
